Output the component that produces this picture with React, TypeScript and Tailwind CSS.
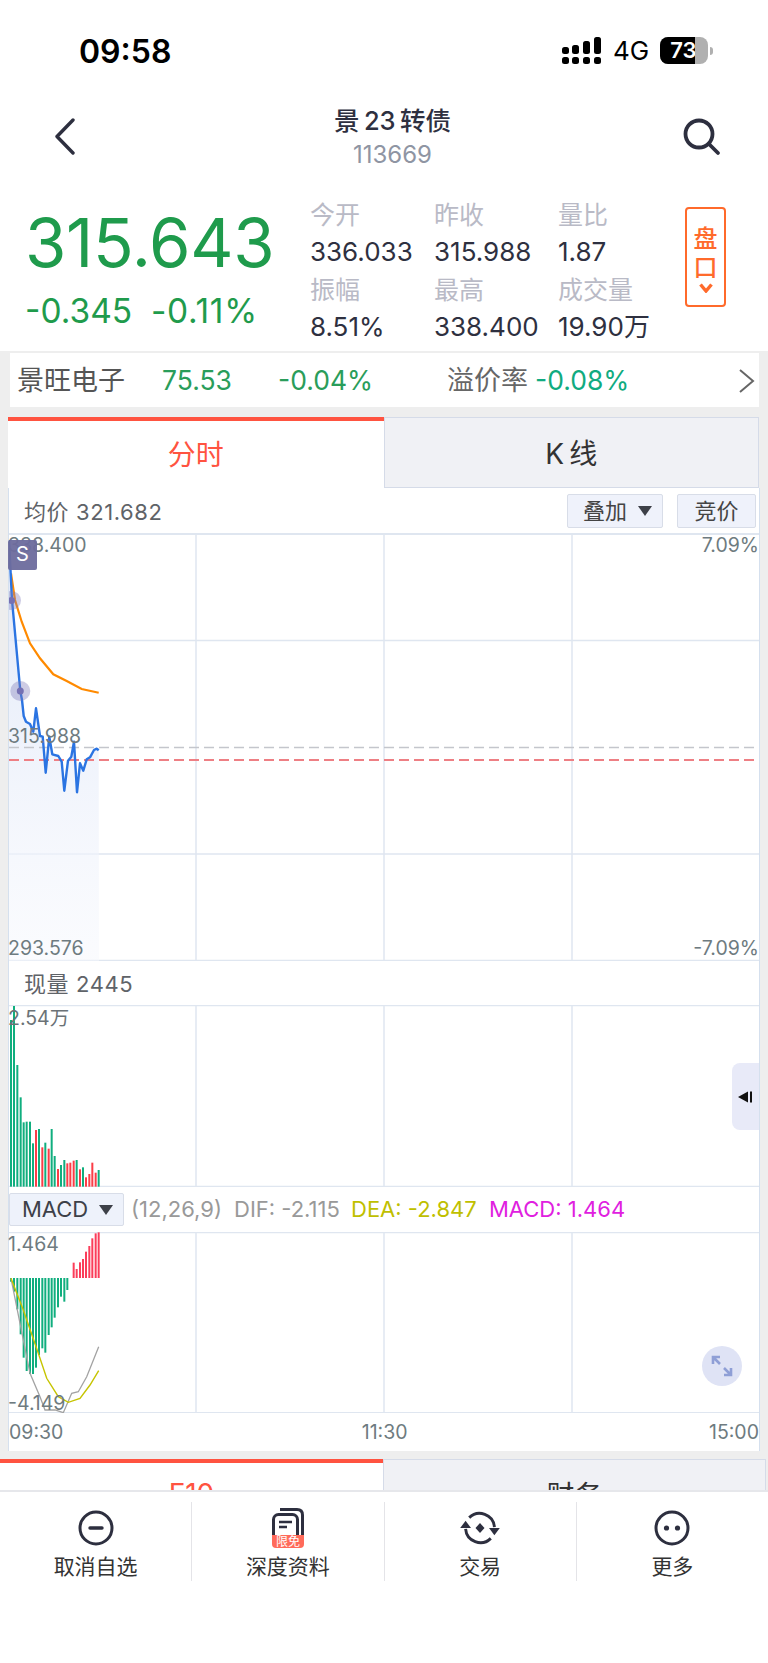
import React from "react";

type Pt = [number, number];

// Traces are kept at 3x page scale; these turn them into page coordinates.
const toPath = (pts: Pt[], ox: number, oy: number) =>
  pts.map(([x, y], i) => `${i ? "L" : "M"}${(x / 3 + ox).toFixed(1)} ${(y / 3 + oy).toFixed(1)}`).join(" ");

const priceTrace: Pt[] = [
  [27, 180], [36, 360], [61, 633], [66, 660], [71, 708], [78, 725], [90, 732], [100, 755], [108, 685], [120, 768], [128, 770],
  [137, 878], [148, 770], [157, 823], [175, 828], [185, 845], [193, 932], [204, 842], [214, 830], [222, 785], [231, 937],
  [240, 850], [250, 872], [260, 838], [270, 832], [282, 810], [290, 806], [296, 811],
];
const avgTrace: Pt[] = [
  [33, 280], [45, 360], [65, 425], [90, 490], [120, 535], [160, 583], [200, 603], [245, 627], [296, 638],
];
const volumeBars: [number, number, "g" | "r"][] = [
  [33, 180, "g"], [42, 138, "g"], [52, 315, "g"], [62, 412, "g"], [71, 487, "g"], [80, 485, "g"], [90, 485, "g"], [99, 550, "g"],
  [108, 510, "r"], [117, 507, "g"], [127, 562, "r"], [136, 548, "g"], [146, 566, "r"], [155, 507, "g"], [164, 588, "g"], [174, 627, "r"],
  [183, 615, "g"], [193, 600, "g"], [202, 610, "r"], [211, 608, "r"], [221, 602, "r"], [230, 600, "g"], [240, 628, "r"], [249, 622, "g"],
  [258, 652, "r"], [268, 642, "r"], [277, 608, "r"], [287, 638, "r"], [296, 630, "g"],
];
const macdBars: [number, number][] = [
  [33, 275], [42, 305], [52, 358], [62, 433], [71, 503], [80, 543], [90, 552], [99, 552], [108, 533], [117, 495], [127, 475], [136, 488],
  [146, 435], [155, 412], [164, 383], [174, 352], [183, 320], [193, 335], [202, 300], [221, 218], [230, 237], [240, 217], [249, 207],
  [258, 185], [268, 168], [277, 145], [287, 130], [296, 127],
];
const difTrace: Pt[] = [
  [33, 265], [60, 400], [90, 550], [120, 620], [135, 660], [165, 660], [190, 668], [215, 610], [235, 605], [260, 560], [296, 470],
];
const deaTrace: Pt[] = [
  [33, 265], [70, 360], [115, 490], [140, 565], [175, 620], [205, 637], [240, 625], [270, 585], [296, 542],
];

const GRID = "#dfe6f0";
const verticals = [196, 384, 572];

function VLines({ top, bottom }: { top: number; bottom: number }) {
  return (
    <>
      {verticals.map((x) => (
        <line key={x} x1={x} x2={x} y1={top} y2={bottom} stroke={GRID} strokeWidth="1.5" />
      ))}
    </>
  );
}

function Stat({ label, value }: { label: string; value: string }) {
  return (
    <div>
      <div className="h-[37.5px] pt-[2px] leading-[37.5px] text-[25px] text-[#b9bac6]">{label}</div>
      <div className="h-[37.5px] leading-[37.5px] text-[26px] text-[#2e3040] whitespace-nowrap">{value}</div>
    </div>
  );
}

function PricePlot() {
  const line = toPath(priceTrace, 0, 480);
  return (
    <div className="relative h-[428px]">
      <svg className="block" width="750" height="428" viewBox="9 533 750 428">
        <defs>
          <linearGradient id="priceFill" x1="0" y1="0" x2="0" y2="1">
            <stop offset="0" stopColor="#dfe7f8" />
            <stop offset="1" stopColor="#f6f8fd" stopOpacity="0.5" />
          </linearGradient>
        </defs>
        <line x1="9" x2="759" y1="534" y2="534" stroke={GRID} strokeWidth="2" />
        <line x1="9" x2="759" y1="640.5" y2="640.5" stroke={GRID} strokeWidth="1.5" />
        <line x1="9" x2="759" y1="854" y2="854" stroke={GRID} strokeWidth="1.5" />
        <line x1="9" x2="759" y1="960.5" y2="960.5" stroke={GRID} strokeWidth="1.5" />
        <VLines top={533} bottom={961} />
        <path d={`M9 540 ${line.replace(/^M/, "L")} L99 961 L9 961 Z`} fill="url(#priceFill)" />
        <line x1="9" x2="759" y1="747.5" y2="747.5" stroke="#c4c6cc" strokeWidth="1.5" strokeDasharray="10 5" />
        <line x1="9" x2="759" y1="760" y2="760" stroke="#ee7f84" strokeWidth="2" strokeDasharray="10 5" />
        <path d={toPath(avgTrace, 0, 480)} fill="none" stroke="#ff8a00" strokeWidth="2.2" />
        <path d={`M9 540 ${line.replace(/^M/, "L")}`} fill="none" stroke="#2b74e2" strokeWidth="2.4" strokeLinejoin="round" />
        <circle cx="11.5" cy="600.5" r="9.5" fill="#7d79b8" fillOpacity="0.38" />
        <circle cx="11.5" cy="600.5" r="3.5" fill="#7570b3" />
        <circle cx="20.3" cy="691" r="10" fill="#7d79b8" fillOpacity="0.38" />
        <circle cx="20.3" cy="691" r="3.5" fill="#7570b3" />
      </svg>
      <span className="absolute left-[-1px] top-[-1px] text-[19.5px] leading-[26px] text-[#6e7b80]">338.400</span>
      <span className="absolute left-[-1px] top-[7px] w-[29px] h-[30px] rounded-[2px] bg-[#6d6b9d]/95 text-white text-[20px] leading-[29px] text-center">S</span>
      <span className="absolute right-0 top-[-1px] text-[19.5px] leading-[26px] text-[#6e7b80]">7.09%</span>
      <span className="absolute left-[-1px] top-[190px] text-[19.5px] leading-[26px] text-[#6e7b80]">315.988</span>
      <span className="absolute left-[-1px] top-[402px] text-[19.5px] leading-[26px] text-[#6e7b80]">293.576</span>
      <span className="absolute right-0 top-[402px] text-[19.5px] leading-[26px] text-[#6e7b80]">-7.09%</span>
    </div>
  );
}

function VolumePlot() {
  return (
    <div className="relative h-[182px]">
      <svg className="block" width="750" height="182" viewBox="9 1005 750 182">
        <line x1="9" x2="759" y1="1005.5" y2="1005.5" stroke={GRID} strokeWidth="1.5" />
        <line x1="9" x2="759" y1="1186.5" y2="1186.5" stroke={GRID} strokeWidth="1.5" />
        <VLines top={1005} bottom={1187} />
        {volumeBars.map(([z, top, kind]) => (
          <rect
            key={z}
            x={z / 3 - 1}
            y={960 + top / 3}
            width="2"
            height={(680 - top) / 3}
            fill={kind === "g" ? "#10ae7e" : "#fb3d47"}
          />
        ))}
      </svg>
      <span className="absolute left-[-1px] top-0 text-[19.5px] leading-[26px] text-[#6b7276]">2.54万</span>
      <span className="absolute right-0 top-[58px] w-[27px] h-[67px] rounded-l-[8px] bg-[#e8eaf8] flex items-center justify-center">
        <svg width="15" height="12" viewBox="0 0 15 12">
          <path d="M0 6 L10 0.5 V11.5 Z" fill="#111" />
          <rect x="12" y="0.5" width="2" height="11" fill="#111" />
        </svg>
      </span>
    </div>
  );
}

function MacdPlot() {
  return (
    <div className="relative h-[181px]">
      <svg className="block" width="750" height="181" viewBox="9 1232 750 181">
        <line x1="9" x2="759" y1="1232.5" y2="1232.5" stroke={GRID} strokeWidth="1.5" />
        <line x1="9" x2="759" y1="1413" y2="1413" stroke={GRID} strokeWidth="2" />
        <VLines top={1232} bottom={1413} />
        {macdBars.map(([z, end]) => {
          const y = 1190 + end / 3;
          return end > 265 ? (
            <rect key={z} x={z / 3 - 1} y={1278} width="2" height={y - 1278} fill="#10ae7e" />
          ) : (
            <rect key={z} x={z / 3 - 1} y={y} width="2" height={1278 - y} fill="#fb3d5a" />
          );
        })}
        <path d={toPath(difTrace, 0, 1190)} fill="none" stroke="#a3a3a3" strokeWidth="1.3" />
        <path d={toPath(deaTrace, 0, 1190)} fill="none" stroke="#c6c400" strokeWidth="1.4" />
      </svg>
      <span className="absolute left-[-1px] top-[-1px] text-[19.5px] leading-[26px] text-[#6e7b80]">1.464</span>
      <span className="absolute left-[-1px] top-[158px] text-[19.5px] leading-[26px] text-[#6e7b80]">-4.149</span>
      <span className="absolute left-[693px] top-[114px] w-[40px] h-[40px] rounded-full bg-[#dfe3f5] flex items-center justify-center">
        <svg width="24" height="24" viewBox="0 0 24 24" fill="none" stroke="#8f9fd6" strokeWidth="2.6">
          <path d="M3 10 V3 H10 M3 3 L10 10" />
          <path d="M21 14 V21 H14 M21 21 L14 14" />
        </svg>
      </span>
    </div>
  );
}

function Caret() {
  return (
    <svg width="14" height="10" viewBox="0 0 14 10" className="shrink-0">
      <path d="M0 0 H14 L7 10 Z" fill="#3d4048" />
    </svg>
  );
}

function FooterItem({ icon, label, last }: { icon: React.ReactNode; label: string; last?: boolean }) {
  return (
    <div className={last ? "flex-1 flex flex-col items-center" : "flex-1 flex flex-col items-center border-r border-[#e4e4e8]"}>
      <div className="h-[50px] w-full pt-[2px] flex items-center justify-center">{icon}</div>
      <div className="mt-[1px] text-[21px] leading-[27px] text-[#333]">{label}</div>
    </div>
  );
}

export default function App() {
  return (
    <div className="w-[768px] h-[1663px] flex flex-col bg-white overflow-hidden font-['Inter','Noto_Sans_CJK_SC',sans-serif]">
      {/* Status bar */}
      <div className="h-[92px] shrink-0 relative flex items-start">
        <span className="ml-[79px] mt-[32px] text-[32px] leading-[40px] font-semibold text-black">09:58</span>
        <div className="absolute left-[561px] top-[36px] flex items-start">
          <svg width="42" height="30" viewBox="0 0 42 30" fill="#000">
            <rect x="1" y="11" width="7" height="7" rx="2.5" />
            <rect x="11" y="9" width="7" height="9" rx="2.5" />
            <rect x="22" y="5" width="7" height="13" rx="2.5" />
            <rect x="33" y="1" width="7" height="17" rx="2.5" />
            <rect x="1" y="21" width="7" height="7" rx="2.5" />
            <rect x="11" y="21" width="7" height="7" rx="2.5" />
            <rect x="22" y="21" width="7" height="7" rx="2.5" />
            <rect x="33" y="21" width="7" height="7" rx="2.5" />
          </svg>
          <span className="ml-[10px] mt-[-1px] text-[26px] leading-[32px] text-black">4G</span>
          <div className="ml-[11px] mt-[1px] relative w-[48px] h-[27px] rounded-[8px] bg-[#b0b0b0] overflow-hidden">
            <div className="w-[35px] h-full bg-black overflow-hidden">
              <span className="block pl-[10px] w-[48px] text-white text-[22px] leading-[27px] font-semibold">73</span>
            </div>
          </div>
          <div className="ml-[2px] mt-[11px] w-[3px] h-[8px] rounded-r-full bg-[#b0b0b0]" />
        </div>
      </div>

      {/* Title bar */}
      <div className="h-[98px] shrink-0 flex items-start justify-between">
        <svg className="ml-[54px] mt-[26px]" width="22" height="37" viewBox="0 0 22 37" fill="none" stroke="#2d2f3f" strokeWidth="3.4" strokeLinecap="round" strokeLinejoin="round">
          <path d="M19 2 L3 18.5 L19 35" />
        </svg>
        <div className="ml-[26px] flex flex-col items-center">
          <div className="mt-[12px] text-[25.5px] leading-[34px] font-medium text-[#2e3040] whitespace-nowrap">景&#8201;23&#8201;转债</div>
          <div className="text-[24px] leading-[34px] text-[#8f95a3]">113669</div>
        </div>
        <svg className="mr-[47px] mt-[26px]" width="38" height="38" viewBox="0 0 38 38" fill="none" stroke="#2d2f3f" strokeWidth="3.8" strokeLinecap="round">
          <circle cx="16" cy="16" r="13.5" />
          <path d="M26 26 L35 35" />
        </svg>
      </div>

      {/* Quote summary */}
      <div className="h-[161px] shrink-0 flex items-start pl-[25px]">
        <div className="w-[285px] shrink-0">
          <div className="mt-[14px] text-[67px] leading-[78px] tracking-[-0.3px] text-[#1f9b4c] whitespace-nowrap">315.643</div>
          <div className="mt-[7px] flex text-[33.5px] leading-[44px] text-[#1f9b4c] whitespace-nowrap">
            <span className="w-[126px]">-0.345</span>
            <span className="tracking-[0.7px]">-0.11%</span>
          </div>
        </div>
        <div className="mt-[5px] grid grid-cols-[124px_124px_127px] w-[375px] shrink-0">
          <Stat label="今开" value="336.033" />
          <Stat label="昨收" value="315.988" />
          <Stat label="量比" value="1.87" />
          <Stat label="振幅" value="8.51%" />
          <Stat label="最高" value="338.400" />
          <Stat label="成交量" value="19.90万" />
        </div>
        <div className="mt-[17px] w-[41px] h-[100px] shrink-0 rounded-[4px] border-2 border-[#ff6a2b] flex flex-col items-center text-[#ff6a2b] text-[24px] leading-[29px] font-medium pt-[15px]">
          <span>盘</span>
          <span>口</span>
          <svg className="mt-[1px]" width="14" height="10" viewBox="0 0 14 10" fill="none" stroke="#ff6a2b" strokeWidth="3.4">
            <path d="M1.5 1.5 L7 8 L12.5 1.5" />
          </svg>
        </div>
      </div>

      {/* Grey page body: underlying row, charts, lower tabs */}
      <div className="h-[1139px] shrink-0 bg-[#eeeeee] overflow-hidden px-2 pt-[2px]">
        <div className="ml-[2px] w-[749px] h-[54px] pt-[2px] bg-white flex items-center">
          <span className="ml-[7px] w-[145px] text-[27px] text-[#555]">景旺电子</span>
          <span className="w-[116px] text-[26.5px] text-[#2a9d5a]">75.53</span>
          <span className="w-[169px] text-[26.5px] text-[#2a9d5a]">-0.04%</span>
          <span className="w-[88px] text-[27px] text-[#666]">溢价率</span>
          <span className="w-[203px] text-[26.5px] text-[#10ab80]">-0.08%</span>
          <svg width="18" height="26" viewBox="0 0 18 26" fill="none" stroke="#666" strokeWidth="2">
            <path d="M2 2 L15 13 L2 24" />
          </svg>
        </div>

        {/* Chart type tabs */}
        <div className="mt-[10px] flex h-[71px] w-[751px]">
          <div className="w-[50%] bg-white border-t-[4px] border-[#ff5340] text-[#ff5340] text-[28px] leading-[69px] text-center">分时</div>
          <div className="flex-1 bg-[#f0f1f5] border border-[#d5dbe8] text-[#333] text-[28px] leading-[73px] text-center">K&#8201;线</div>
        </div>

        <div className="w-[752px] bg-white border-x border-[#d5e0ee]">
          {/* Intraday price */}
          <div className="h-[45px] flex items-start">
            <span className="ml-[15px] mt-[10px] text-[22px] leading-[28px] tracking-[0.6px] text-[#5f6368]">均价 321.682</span>
            <div className="ml-auto mt-[6px] mr-[3px] flex gap-[14px]">
              <div className="w-[96px] h-[34px] rounded-[2px] bg-[#eff2fb] border border-[#d8dde8] flex items-center pl-[15px] gap-[11px] text-[22px] text-[#444]">
                <span>叠加</span>
                <Caret />
              </div>
              <div className="w-[79px] h-[34px] rounded-[2px] bg-[#eff2fb] border border-[#d8dde8] flex items-center justify-center text-[22px] text-[#444]">竞价</div>
            </div>
          </div>
          <PricePlot />

          {/* Volume */}
          <div className="h-[44px] pt-[2px] flex items-center">
            <span className="ml-[15px] text-[22px] tracking-[0.6px] text-[#5f6368]">现量 2445</span>
          </div>
          <VolumePlot />

          {/* MACD */}
          <div className="h-[45px] flex items-center whitespace-nowrap text-[22px]">
            <div className="w-[115px] h-[33px] rounded-[2px] bg-[#eef2fb] border border-[#d8dde8] flex items-center pl-[12px] gap-[11px] text-[#3d4048]">
              <span>MACD</span>
              <Caret />
            </div>
            <span className="ml-[7px] w-[103px] text-[#999]">(12,26,9)</span>
            <span className="w-[117px] text-[#999]">DIF: -2.115</span>
            <span className="w-[138px] text-[#bfbf00]">DEA: -2.847</span>
            <span className="text-[#e020e0]">MACD: 1.464</span>
          </div>
          <MacdPlot />

          {/* Session time axis */}
          <div className="h-[38px] pt-[2px] flex items-center justify-between text-[19.5px] text-[#6e7b80]">
            <span>09:30</span>
            <span className="mr-[3px]">11:30</span>
            <span>15:00</span>
          </div>
        </div>

        {/* Detail tabs, running under the action bar */}
        <div className="mt-[8px] ml-[-8px] flex h-[71px] w-[766px]">
          <div className="w-[50%] bg-white border-t-[4px] border-[#ff5340] text-[#ff5340] text-[28px] leading-[63px] text-center">F10</div>
          <div className="flex-1 bg-[#f0f1f5] border border-[#d5dbe8] text-[#333] text-[28px] leading-[73px] text-center">财务</div>
        </div>
      </div>

      {/* Bottom action bar */}
      <div className="flex-1 bg-white border-t-2 border-[#e6e7eb]">
        <div className="mt-[10px] h-[79px] flex">
          <FooterItem
            label="取消自选"
            icon={
              <svg width="36" height="36" viewBox="0 0 36 36" fill="none" stroke="#2d2f3f" strokeWidth="3">
                <circle cx="18" cy="18" r="16" />
                <path d="M12 18 H24" strokeWidth="3.4" strokeLinecap="round" />
              </svg>
            }
          />
          <FooterItem
            label="深度资料"
            icon={
              <svg width="34" height="42" viewBox="0 0 34 42">
                <path d="M9 2.5 H26 Q31.5 2.5 31.5 8 V32" fill="none" stroke="#2d2f3f" strokeWidth="3" />
                <rect x="2.5" y="7.5" width="24" height="30" rx="5" fill="#fff" stroke="#2d2f3f" strokeWidth="3" />
                <path d="M8 15 H21 M8 20 H16" stroke="#2d2f3f" strokeWidth="2.6" />
                <path d="M1 28 H33 V37 Q33 41 29 41 H5 Q1 41 1 37 Z" fill="#ff6a5a" />
                <text x="17" y="39" textAnchor="middle" fontSize="12" fill="#fff">限免</text>
              </svg>
            }
          />
          <FooterItem
            label="交易"
            icon={
              <svg width="40" height="36" viewBox="0 0 44 40" fill="none" stroke="#2d2f3f" strokeWidth="3.2">
                <path d="M38 19 A16.5 16.5 0 0 0 10 8.5" />
                <path d="M6 21 A16.5 16.5 0 0 0 34 31.5" />
                <path d="M0 20 L6 12 L12 20 Z" fill="#2d2f3f" stroke="none" />
                <path d="M32 20 L38 28 L44 20 Z" fill="#2d2f3f" stroke="none" />
                <path d="M22 14.5 L27 20 L22 25.5 L17 20 Z" fill="#2d2f3f" stroke="none" />
              </svg>
            }
          />
          <FooterItem
            last
            label="更多"
            icon={
              <svg width="36" height="36" viewBox="0 0 36 36" fill="none" stroke="#2d2f3f" strokeWidth="3">
                <circle cx="18" cy="18" r="16" />
                <circle cx="12.5" cy="18" r="2.6" fill="#2d2f3f" stroke="none" />
                <circle cx="23.5" cy="18" r="2.6" fill="#2d2f3f" stroke="none" />
              </svg>
            }
          />
        </div>
      </div>
    </div>
  );
}
